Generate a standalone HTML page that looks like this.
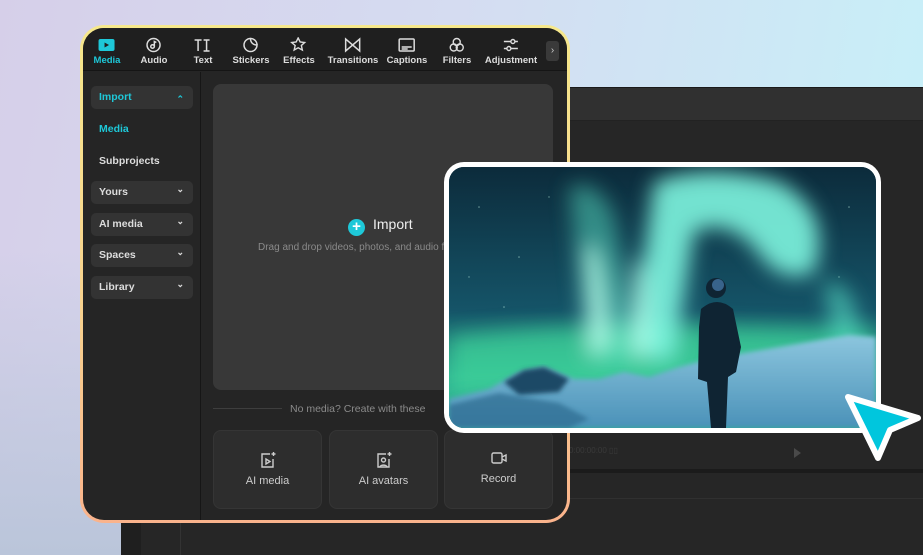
<!DOCTYPE html>
<html><head><meta charset="utf-8"><style>
*{margin:0;padding:0;box-sizing:border-box}
body{width:923px;height:555px;overflow:hidden;position:relative;font-family:"Liberation Sans",sans-serif;
background:linear-gradient(100deg,#d6cfe9 0%,#d5dcf1 45%,#c6f2f9 100%);}
.bgl{position:absolute;left:0;top:250px;width:130px;height:305px;background:linear-gradient(180deg,rgba(190,198,222,0),#bac5da)}
.ed{position:absolute;left:121px;top:87px;right:0;bottom:0;background:#262626;border-top:1px solid #1a1a1a}
.ed .band{position:absolute;left:0;right:0;top:0;height:33px;background:#303030;border-bottom:1px solid #222}
.ed .l1{position:absolute;left:0;right:0;top:381px;height:4px;background:#1b1b1b}
.ed .l2{position:absolute;left:0;right:0;top:410px;height:1px;background:#303030}
.ed .tc{position:absolute;left:448px;top:358px;font-size:8px;color:#3a3a3a}
.ed .play{position:absolute;left:673px;top:360px;width:0;height:0;border-left:7px solid #4a4a4a;border-top:5px solid transparent;border-bottom:5px solid transparent}
.ed .lc{position:absolute;left:0;top:434px;width:20px;bottom:0;background:#1f1f1f}
.ed .lv{position:absolute;left:59px;top:434px;width:1px;bottom:0;background:#333}
.panel{position:absolute;left:80px;top:25px;width:490px;height:498px;border-radius:24px;padding:3px;
background:linear-gradient(180deg,#f6e88c 0%,#f8d08e 60%,#fab38c 100%)}
.in{position:relative;width:100%;height:100%;border-radius:21px;background:#252525;overflow:hidden}
.top{position:absolute;left:0;top:0;right:0;height:43px;background:#1f1f1f;border-bottom:1px solid #151515}
.tab{position:absolute;top:9px;transform:translateX(-50%);text-align:center;color:#ddd;font-size:9.5px;font-weight:bold;white-space:nowrap}
.tab svg{display:block;margin:0 auto 2px;width:18px;height:16px}
.tab.on{color:#1ec8d8}
.more{position:absolute;left:463px;top:13px;width:13px;height:20px;background:#3a3a3a;border-radius:3px;color:#ccc;font-size:10px;text-align:center;line-height:20px}
.side{position:absolute;left:0;top:44px;width:118px;bottom:0;border-right:1px solid #161616}
.si{position:absolute;left:8px;width:102px;height:23px;border-radius:5px;background:#333;color:#ddd;font-size:10.5px;font-weight:bold;padding-left:8px;line-height:23px}
.si:after{content:"⌄";position:absolute;right:9px;top:-3px;font-size:9px}
.si.up:after{content:"⌃";top:2px;color:#1ec8d8}
.st{position:absolute;left:16px;font-size:10.5px;font-weight:bold;color:#ddd}
.drop{position:absolute;left:130px;top:56px;width:340px;height:306px;background:#383838;border-radius:8px}
.imp{position:absolute;left:135px;top:132px;font-size:14px;color:#eee}
.imp b{display:inline-block;width:17px;height:17px;border-radius:50%;background:#1ec8d8;color:#fff;text-align:center;line-height:16px;font-size:15px;margin-right:8px;vertical-align:-2px;font-weight:bold}
.dd{position:absolute;left:45px;top:158px;font-size:10px;color:#8a8a8a;white-space:nowrap}
.nm{position:absolute;left:130px;top:375px;font-size:10.5px;color:#8a8a8a;white-space:nowrap}
.nm i{display:inline-block;width:69px;height:1px;background:#3e3e3e;vertical-align:3px;margin-right:8px}
.cd{position:absolute;top:402px;width:109px;height:79px;background:#2d2d2d;border:1px solid #353535;border-radius:8px;color:#ccc;font-size:11px;text-align:center}
.cd svg{display:block;margin:20px auto 6px;width:18px;height:18px}
.card{position:absolute;left:444px;top:162px;width:437px;height:271px;border-radius:20px;background:#fff;padding:5px}
.ci{width:100%;height:100%;border-radius:15px;overflow:hidden;background:#0d2b3c}
</style></head><body>
<div class="bgl"></div>
<div class="ed"><div class="band"></div><div class="tc">0:00:00:00 ▯▯</div><div class="play"></div><div class="l1"></div><div class="l2"></div><div class="lc"></div><div class="lv"></div></div>

<div class="panel"><div class="in">
<div class="top">
<div class="tab on" style="left:24px"><svg viewBox="0 0 18 16"><rect x="1" y="2" width="16" height="12" rx="2" fill="#1ec8d8"/><path d="M7 5.5v5l4.5-2.5z" fill="#1f1f1f"/></svg>Media</div>
<div class="tab" style="left:71px"><svg viewBox="0 0 18 16" fill="none" stroke="#ddd" stroke-width="1.5"><circle cx="9" cy="8" r="6.5"/><circle cx="8" cy="9.5" r="1.8"/><path d="M9.8 9.5V4.5l2 1"/></svg>Audio</div>
<div class="tab" style="left:120px"><svg viewBox="0 0 18 16" fill="none" stroke="#ddd" stroke-width="1.5"><path d="M1 3h7M4.5 3v11M10 3h6M13 3v11M10 14h6"/></svg>Text</div>
<div class="tab" style="left:168px"><svg viewBox="0 0 18 16" fill="none" stroke="#ddd" stroke-width="1.5"><path d="M15.5 8A6.5 6.5 0 1 1 9 1.5c0 4 2.5 6.5 6.5 6.5z"/><path d="M9 1.5c3.6 0 6.5 2.9 6.5 6.5"/></svg>Stickers</div>
<div class="tab" style="left:216px"><svg viewBox="0 0 18 16" fill="none" stroke="#ddd" stroke-width="1.4"><path d="M8 1l2 4 4.5.5-3.3 3 1 4.5L8 10.8 4 13l1-4.5L1.5 5.5 6 5z"/></svg>Effects</div>
<div class="tab" style="left:270px"><svg viewBox="0 0 18 16" fill="none" stroke="#ddd" stroke-width="1.5"><path d="M2 2v12l14-12v12z"/></svg>Transitions</div>
<div class="tab" style="left:324px"><svg viewBox="0 0 18 16" fill="none" stroke="#ddd" stroke-width="1.5"><rect x="1.5" y="2" width="15" height="12" rx="1"/><path d="M4 10h10M4 12h6"/></svg>Captions</div>
<div class="tab" style="left:374px"><svg viewBox="0 0 18 16" fill="none" stroke="#ddd" stroke-width="1.4"><circle cx="9" cy="5" r="3.5"/><circle cx="6" cy="10.5" r="3.5"/><circle cx="12" cy="10.5" r="3.5"/></svg>Filters</div>
<div class="tab" style="left:428px"><svg viewBox="0 0 18 16" fill="none" stroke="#ddd" stroke-width="1.4"><path d="M2 4.5h14M2 11.5h14"/><circle cx="11" cy="4.5" r="2" fill="#1f1f1f"/><circle cx="7" cy="11.5" r="2" fill="#1f1f1f"/></svg>Adjustment</div>
<div class="more">›</div>
</div>
<div class="side">
<div class="si up" style="top:14px;color:#1ec8d8">Import</div>
<div class="st" style="top:51px;color:#1ec8d8">Media</div>
<div class="st" style="top:83px">Subprojects</div>
<div class="si" style="top:109px">Yours</div>
<div class="si" style="top:141px">AI media</div>
<div class="si" style="top:172px">Spaces</div>
<div class="si" style="top:204px">Library</div>
</div>
<div class="drop"><div class="imp"><b>+</b>Import</div><div class="dd">Drag and drop videos, photos, and audio files here</div></div>
<div class="nm"><i></i>No media? Create with these</div>
<div class="cd" style="left:130px"><svg viewBox="0 0 18 18" fill="none" stroke="#ccc" stroke-width="1.4"><path d="M11 3H3v13h11V8"/><path d="M7 8v5l4-2.5z"/><path d="M14.5 1v4M12.5 3h4"/></svg>AI media</div>
<div class="cd" style="left:246px"><svg viewBox="0 0 18 18" fill="none" stroke="#ccc" stroke-width="1.4"><path d="M11 3H3v13h11V8"/><circle cx="8.5" cy="9" r="2"/><path d="M5 16c0-2.5 7-2.5 7 0"/><path d="M14.5 1v4M12.5 3h4"/></svg>AI avatars</div>
<div class="cd" style="left:361px"><svg viewBox="0 0 18 18" fill="none" stroke="#ccc" stroke-width="1.4" style="margin-top:18px"><rect x="2" y="4" width="10" height="10" rx="1.5"/><path d="M12 8l4-2v6l-4-2"/></svg>Record</div>
</div></div>

<div class="card"><div class="ci">
<svg width="427" height="261" viewBox="0 0 427 261">
<defs>
<filter id="b" x="-30%" y="-30%" width="160%" height="160%"><feGaussianBlur stdDeviation="10"/></filter>
<filter id="b2"><feGaussianBlur stdDeviation="2.5"/></filter>
<linearGradient id="sky" x1="0" y1="0" x2="0" y2="1"><stop offset="0" stop-color="#0c2b3b"/><stop offset=".55" stop-color="#155468"/><stop offset=".8" stop-color="#2fae92"/></linearGradient>
<linearGradient id="snow" x1="0" y1="0" x2="0" y2="1"><stop offset="0" stop-color="#8cc6de"/><stop offset="1" stop-color="#4a91b8"/></linearGradient>
</defs>
<rect width="427" height="261" fill="url(#sky)"/>
<g fill="#cfe" opacity=".5"><circle cx="30" cy="40" r=".8"/><circle cx="70" cy="90" r=".8"/><circle cx="100" cy="30" r=".7"/><circle cx="55" cy="140" r=".8"/><circle cx="400" cy="40" r=".8"/><circle cx="390" cy="110" r=".7"/><circle cx="20" cy="110" r=".7"/></g>
<g filter="url(#b)" fill="#5ff0cf">
<path d="M0 170 Q150 150 427 165 L427 215 L0 230Z" fill="#3fd49a" opacity=".75"/>
<path d="M120 20 Q150 10 165 50 L190 190 Q170 200 140 190 Q130 120 120 20z" opacity=".45"/>
<path d="M205 15 Q260 -5 330 15 Q385 45 365 105 Q330 120 305 80 Q275 50 245 65 L225 190 Q195 200 185 170 Z" fill="#7ef5df" opacity=".9"/>
<path d="M135 80 Q155 60 162 180 L140 190z" fill="#b8fbe8" opacity=".8"/>
<path d="M185 90 Q200 95 200 190 L180 190z" fill="#b8fbe8" opacity=".7"/>
<path d="M375 115 Q405 110 412 170 L385 180z" opacity=".55"/>
</g>
<path d="M0 232 L40 222 L70 205 L95 200 L125 212 L150 212 L175 205 L200 210 L230 200 L260 192 L330 180 L400 168 L427 170 L427 261 L0 261Z" fill="url(#snow)" filter="url(#b2)"/>
<path d="M55 215 L75 203 L95 200 L120 212 L110 225 L70 228Z" fill="#1f4a66" filter="url(#b2)"/>
<path d="M0 238 L50 226 L110 236 L140 252 L120 261 L0 261Z" fill="#2f6c90" filter="url(#b2)" opacity=".7"/>
<g fill="#0f2433">
<circle cx="267" cy="121" r="10"/>
<path d="M252 142 Q268 128 284 142 L292 180 L287 205 L279 210 L277 261 L262 261 L258 215 L249 212 L250 160 Z"/>
</g>
<circle cx="269" cy="118" r="6" fill="#4a7fb0" opacity=".7"/>
</svg>
</div></div>

<svg style="position:absolute;left:838px;top:388px" width="85" height="76" viewBox="0 0 85 76">
<path d="M10 9 L80 30 L52 42 L40 70 Z" fill="#00c6dd" stroke="#fff" stroke-width="6" stroke-linejoin="round"/>
</svg>
</body></html>
